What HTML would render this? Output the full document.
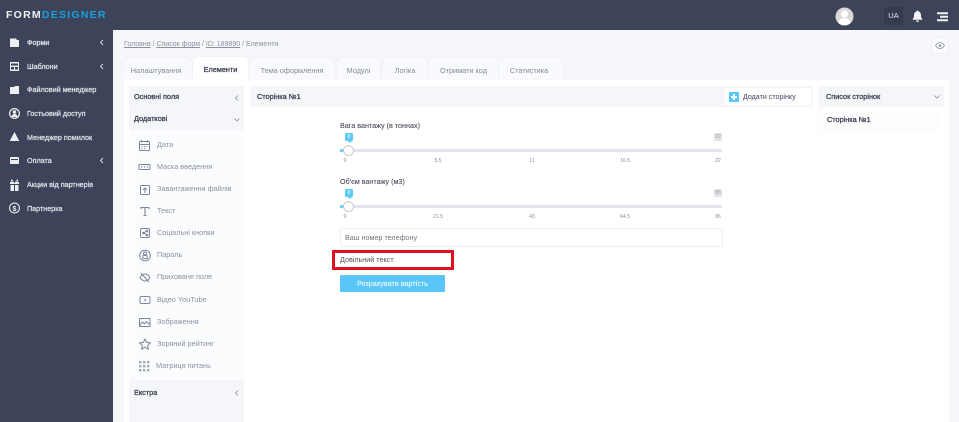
<!DOCTYPE html>
<html><head><meta charset="utf-8"><style>
html,body{margin:0;padding:0;width:959px;height:422px;overflow:hidden;background:#f5f7fb;font-family:"Liberation Sans",sans-serif}
div,svg{position:absolute}
#w{left:0;top:0;width:959px;height:422px;overflow:hidden;filter:blur(.25px)}
.t{white-space:nowrap;line-height:12px;height:12px}
.m{left:27px;font-size:7.2px;color:#dfe2ea;-webkit-text-stroke:.25px #dfe2ea}
.tab{top:58px;height:22px;background:#f9fafd;border-radius:5px 5px 0 0;box-shadow:0 -1px 2px rgba(80,90,120,.05);font-size:7.3px;color:#85889a;text-align:center;line-height:25px}
.it{left:157px;font-size:7.3px;color:#8c8fa1}
.h{font-size:7.3px;color:#3d4252;-webkit-text-stroke:.3px #3d4252}
.tk{font-size:5px;color:#8a8d98;width:20px;text-align:center;line-height:8px}
.ic{fill:none;stroke:#7f849a;stroke-width:1}
.b{font-size:7.2px;color:#4a4d5a;-webkit-text-stroke:.1px #4a4d5a}
</style></head><body><div id="w">
<div style="left:0;top:0;width:959px;height:30px;background:#3d4459"></div>
<div style="left:0;top:30px;width:113px;height:392px;background:#3d4459"></div>
<div class="t" style="left:6px;top:8px;font-size:10.5px;font-weight:700;letter-spacing:1.25px;color:#f0f2f5;line-height:14px;height:14px">FORM<span style="color:#15a0e0">DESIGNER</span></div>

<div class="t m" style="top:37px">Форми</div>
<div class="t m" style="top:61px">Шаблони</div>
<div class="t m" style="top:84px">Файловий менеджер</div>
<div class="t m" style="top:108px">Гостьовий доступ</div>
<div class="t m" style="top:132px">Менеджер помилок</div>
<div class="t m" style="top:155px">Оплата</div>
<div class="t m" style="top:179px">Акции від партнерів</div>
<div class="t m" style="top:203px">Партнерка</div>

<svg style="left:0;top:30px" width="113" height="190" viewBox="0 30 113 190">
<g fill="#eceef2">
<path d="M10 38.500h6l1 1.500h2v7h-9z"/>
<path fill-rule="evenodd" d="M10 62h9v9h-9zM11 63.500v2h7v-2zM11 67v2.500h3V67zM15 67v2.500h3V67z"/>
<path d="M10 87h4l1-1h4v8h-9z"/>
<path fill-rule="evenodd" d="M14.500 108a5.500 5.500 0 1 0 .01 0zM14.500 109.300a4.200 4.200 0 1 1-.01 0z"/>
<circle cx="14.500" cy="112" r="1.800"/><path d="M11.500 117c0-2 1.500-3 3-3s3 1 3 3z"/>
<path d="M14.500 132l4.800 9h-9.600z"/>
<rect x="10" y="157" width="9" height="7" rx="1"/>
<path d="M10 182h4v1h1v-1h4v2h-9zM10.500 185h3.500v6h-3.500zM15 185h3.500v6H15zM11 179l3 2.500h1l3-2.500v2.500h-7z"/>
<path fill-rule="evenodd" d="M14.500 202.500a5.500 5.500 0 1 0 .01 0zM14.500 203.600a4.400 4.400 0 1 1-.01 0z"/>
</g>
<g fill="none" stroke="#3d4459" stroke-width="1"><path d="M11 159.500h7"/></g>
<text x="14.500" y="211" font-size="7" font-weight="700" fill="#eceef2" text-anchor="middle" font-family="Liberation Sans">$</text>
<g fill="none" stroke="#d5d8e1" stroke-width="1"><path d="M103 40l-2.500 2.500 2.500 2.500M103 64l-2.500 2.500 2.500 2.500M103 158l-2.500 2.500 2.500 2.500"/></g>
</svg>

<!-- header right -->
<svg style="left:835px;top:7px" width="19" height="19" viewBox="0 0 19 19"><circle cx="9.500" cy="9.500" r="9" fill="#d9d9d9"/><circle cx="9.500" cy="7" r="3.600" fill="#fff"/><path d="M3.500 16c.5-4 3.500-5 6-5s5.500 1 6 5a9 9 0 0 1-12 0z" fill="#fff"/></svg>
<div style="left:884px;top:7px;width:19px;height:18px;background:#363c50;border-radius:2px"></div>
<div class="t" style="left:884px;top:10px;width:19px;text-align:center;font-size:7.5px;color:#e6e8ee">UA</div>
<svg style="left:912px;top:10px" width="11" height="12" viewBox="0 0 11 12"><path d="M5.500 .5c.6 0 1 .4 1 1 1.800.5 2.500 2 2.500 4 0 2 .5 2.600 1.300 3.500v.8H.7V9c.8-.9 1.300-1.500 1.300-3.500s.7-3.500 2.500-4c0-.6.4-1 1-1zM4 10.500h3a1.500 1.500 0 0 1-3 0z" fill="#f2f3f6"/></svg>
<svg style="left:937px;top:12px" width="12" height="10" viewBox="0 0 12 10"><path d="M0 .3h11v2H0zM3 3.800h8v2H3zM0 7.300h11v2H0z" fill="#f2f3f6"/></svg>

<!-- breadcrumb -->
<div class="t" style="left:124px;top:39px;font-size:7px;color:#8e909c"><u>Головна</u> / <u>Список форм</u> / <u>ID: 189890</u> / Елементи</div>
<div style="left:931px;top:37px;width:18px;height:17px;background:#fafbfd;border:1px solid #f0f1f5;box-sizing:border-box;border-radius:2px"></div>
<svg style="left:935px;top:42px" width="10" height="7" viewBox="0 0 10 7"><path d="M.5 3.500C2 1.200 3.500.5 5 .5s3 .7 4.500 3C8 5.800 6.500 6.500 5 6.500S2 5.800.5 3.500z" fill="none" stroke="#8f92a0" stroke-width=".8"/><circle cx="5" cy="3.500" r="1.300" fill="#8f92a0"/></svg>

<!-- tabs -->
<div class="tab" style="left:124px;width:68px;text-indent:-4px">Налаштування</div>
<div class="tab" style="left:250px;width:84px">Тема оформлення</div>
<div class="tab" style="left:337px;width:43px">Модулі</div>
<div class="tab" style="left:383px;width:44px">Логіка</div>
<div class="tab" style="left:429px;width:69px">Отримати код</div>
<div class="tab" style="left:499px;width:64px;text-indent:-4px">Статистика</div>

<!-- panel -->
<div style="left:124px;top:80px;width:825px;height:342px;background:#fff"></div>
<div class="tab" style="left:193px;top:57px;width:55px;height:24px;background:#fff;color:#3d4252;-webkit-text-stroke:.3px #3d4252;line-height:26px">Елементи</div>

<!-- left col -->
<div style="left:129px;top:86px;width:115px;height:44px;background:#f5f6f9"></div>
<div style="left:129px;top:130px;width:115px;height:250px;background:#fbfcfe"></div>
<div style="left:129px;top:380px;width:115px;height:42px;background:#f5f6f9"></div>
<div class="t h" style="left:134px;top:91px">Основні поля</div>
<div class="t h" style="left:134px;top:113px">Додаткові</div>
<div class="t h" style="left:134px;top:387px">Екстра</div>
<svg style="left:230px;top:90px" width="14" height="310" viewBox="0 0 14 310"><g fill="none" stroke="#8b8e9b" stroke-width=".8"><path d="M8 5.500L5.500 8 8 10.500M4.500 28.500L7 31l2.500-2.500M8 300.500L5.500 303 8 305.500"/></g></svg>

<div class="t it" style="top:139px">Дата</div>
<div class="t it" style="top:161px">Маска введення</div>
<div class="t it" style="top:183px">Завантаження файлів</div>
<div class="t it" style="top:205px">Текст</div>
<div class="t it" style="top:227px">Соціальні кнопки</div>
<div class="t it" style="top:249px">Пароль</div>
<div class="t it" style="top:271px">Приховане поле</div>
<div class="t it" style="top:294px">Відео YouTube</div>
<div class="t it" style="top:316px">Зображення</div>
<div class="t it" style="top:338px">Зоряний рейтинг</div>
<div class="t it" style="top:360px;left:156px">Матриця питань</div>

<svg style="left:136px;top:136px" width="18" height="240" viewBox="136 136 18 240">
<g class="ic">
<rect x="139.500" y="141.500" width="10" height="9" rx="1"/><path d="M139.500 144.500h10M141.500 140v2.500M147.500 140v2.500M141.500 146.500h1M144 146.500h1M146.500 146.500h1M141.500 148.500h1M144 148.500h1"/>
<rect x="139" y="164.500" width="11" height="5" rx="1"/><path d="M141 167h1.200M144 167h1.200M147 167h1.200" stroke-width="1.200"/>
<rect x="140.500" y="185.500" width="9" height="9" rx="1"/><path d="M145 193v-5M143 190l2-2 2 2"/>
<path d="M141 209v-1.500h8v1.500M145 207.500v8M143.500 215.500h3" stroke-width="1.100"/>
<rect x="140.500" y="228.500" width="9" height="9" rx="1.500"/><path d="M147 231l-3.500 2 3.500 2"/>
<circle cx="147" cy="231" r=".8"/><circle cx="143.500" cy="233" r=".8"/><circle cx="147" cy="235" r=".8"/>
<circle cx="145" cy="255.500" r="5.300"/><circle cx="145" cy="253.500" r="1.500"/><rect x="142.800" y="255.500" width="4.400" height="3" rx=".8"/>
<path d="M140 277.500c1.500-2.500 3.200-3.500 5-3.500s3.500 1 5 3.500c-1.500 2.500-3.200 3.500-5 3.500s-3.500-1-5-3.500zM141 273l8 9"/>
<rect x="140" y="296.500" width="10" height="7" rx="1.500"/><path d="M144.500 299l2 1-2 1" fill="#7f849a" stroke-width=".5"/>
<rect x="139.500" y="318.500" width="10.500" height="8"/><path d="M140 325l2.500-3 2 2 2-2.500 3 3"/>
<path d="M145 339l1.600 3.400 3.800.5-2.800 2.500.8 3.700-3.400-1.900-3.400 1.900.8-3.700-2.800-2.500 3.800-.5z"/>
</g>
<g fill="#a4a7b6"><rect x="139" y="361" width="2.400" height="2.400"/><rect x="143" y="361" width="2.400" height="2.400"/><rect x="147" y="361" width="2.400" height="2.400"/><rect x="139" y="365" width="2.400" height="2.400"/><rect x="143" y="365" width="2.400" height="2.400"/><rect x="147" y="365" width="2.400" height="2.400"/><rect x="139" y="369" width="2.400" height="2.400"/><rect x="143" y="369" width="2.400" height="2.400"/><rect x="147" y="369" width="2.400" height="2.400"/></g>
</svg>

<!-- centre head -->
<div style="left:250px;top:86px;width:563px;height:21px;background:#f5f6f9"></div>
<div class="t h" style="left:257px;top:91px">Сторінка №1</div>
<div style="left:725px;top:88px;width:86px;height:17px;background:#fff"></div>
<div style="left:729px;top:92px;width:10px;height:10px;background:#59c6f5;border-radius:1px"></div>
<div style="left:733px;top:94px;width:2px;height:6px;background:#fff"></div>
<div style="left:731px;top:96px;width:6px;height:2px;background:#fff"></div>
<div class="t" style="left:743px;top:91px;font-size:7.1px;color:#444857;line-height:13px;height:13px">Додати сторінку</div>

<!-- right col -->
<div style="left:818px;top:86px;width:126px;height:21px;background:#f5f6f9"></div>
<div class="t h" style="left:826px;top:91px">Список сторінок</div>
<svg style="left:932px;top:94px" width="10" height="6" viewBox="0 0 10 6"><path d="M2.500 1.500L5 4l2.500-2.500" fill="none" stroke="#8b8e9b" stroke-width=".8"/></svg>
<div style="left:818px;top:107px;width:122px;height:25px;background:#fdfdfe"></div>
<div class="t h" style="left:827px;top:114px">Сторінка №1</div>

<!-- slider 1 -->
<div class="t b" style="left:340px;top:120px">Вага вантажу (в тоннах)</div>
<div style="left:345px;top:133px;width:8px;height:8px;background:#5fcbf7;border-radius:1px;color:#fff;font-size:5px;line-height:8px;text-align:center">0</div>
<div style="left:347.500px;top:141px;border:2px solid transparent;border-top:2px solid #5fcbf7;border-bottom:0"></div>
<div style="left:714px;top:133px;width:8px;height:8px;background:#e3e4ea;border-radius:1px;color:#9a9ca6;font-size:5px;line-height:8px;text-align:center">22</div>
<div style="left:340px;top:149px;width:382px;height:3px;background:#e3e4ec"></div>
<div style="left:340px;top:149px;width:8px;height:3px;background:#6fd0f7"></div>
<div style="left:342.500px;top:144.500px;width:11px;height:11px;box-sizing:border-box;border-radius:50%;background:#fff;border:1px solid #c9cbd3"></div>
<div class="tk" style="left:335px;top:157px">0</div>
<div class="tk" style="left:428px;top:157px">5.5</div>
<div class="tk" style="left:522px;top:157px">11</div>
<div class="tk" style="left:615px;top:157px">16.5</div>
<div class="tk" style="left:708px;top:157px">22</div>

<!-- slider 2 -->
<div class="t b" style="left:340px;top:176px">Об'єм вантажу (м3)</div>
<div style="left:345px;top:189px;width:8px;height:8px;background:#5fcbf7;border-radius:1px;color:#fff;font-size:5px;line-height:8px;text-align:center">0</div>
<div style="left:347.500px;top:197px;border:2px solid transparent;border-top:2px solid #5fcbf7;border-bottom:0"></div>
<div style="left:714px;top:189px;width:8px;height:8px;background:#e3e4ea;border-radius:1px;color:#9a9ca6;font-size:5px;line-height:8px;text-align:center">86</div>
<div style="left:340px;top:205px;width:382px;height:3px;background:#e3e4ec"></div>
<div style="left:340px;top:205px;width:8px;height:3px;background:#6fd0f7"></div>
<div style="left:342.500px;top:200.500px;width:11px;height:11px;box-sizing:border-box;border-radius:50%;background:#fff;border:1px solid #c9cbd3"></div>
<div class="tk" style="left:335px;top:213px">0</div>
<div class="tk" style="left:428px;top:213px">21.5</div>
<div class="tk" style="left:522px;top:213px">43</div>
<div class="tk" style="left:615px;top:213px">64.5</div>
<div class="tk" style="left:708px;top:213px">86</div>

<!-- input -->
<div style="left:340px;top:228px;width:383px;height:19px;box-sizing:border-box;border:1px solid #eeeef2;border-radius:2px;background:#fff"></div>
<div class="t" style="left:345px;top:232px;font-size:7.2px;color:#72757f">Ваш номер телефону</div>

<div style="left:332px;top:250px;width:122px;height:20px;box-sizing:border-box;border:3px solid #dc101e"></div>
<div class="t" style="left:340px;top:254px;font-size:7.2px;color:#4f525c">Довільний текст</div>

<div style="left:340px;top:275px;width:105px;height:17px;background:#58c6f6;border-radius:1px;color:#e6f7ff;font-size:7.2px;-webkit-text-stroke:.15px #e6f7ff;line-height:18px;text-align:center">Розрахувати вартість</div>
</div></body></html>
